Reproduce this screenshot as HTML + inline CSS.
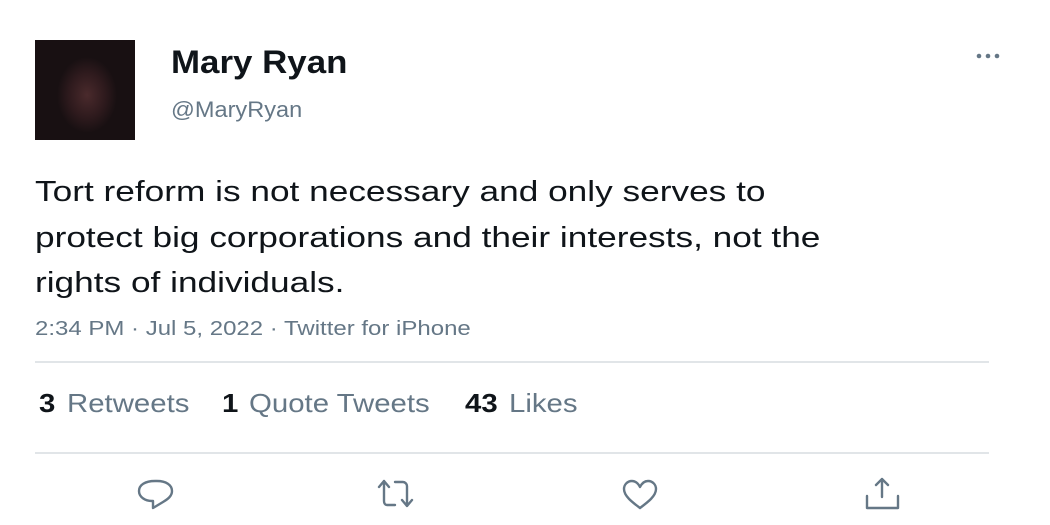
<!DOCTYPE html>
<html><head><style>
body{margin:0;width:1050px;height:525px;background:#fff;font-family:"Liberation Sans",Arial,sans-serif;position:relative;overflow:hidden}
.a{position:absolute;white-space:nowrap;transform-origin:0 0}
.av{left:35px;top:40px;width:100px;height:100px;background:radial-gradient(ellipse 30px 38px at 52px 55px,#4a2a2c 0%,#2e1a1d 60%,#181012 100%)}
.name{left:171px;top:44px;font-size:32px;font-weight:bold;color:#0f1419;transform:scaleX(1.09)}
.handle{left:171px;top:97px;font-size:22px;color:#657786;transform:scaleX(1.07)}
.text{left:35px;top:170px;font-size:29px;line-height:45.5px;color:#0f1419;transform:scaleX(1.215)}
.meta{left:35px;top:318px;font-size:20px;color:#657786;transform:scaleX(1.2)}
.hr{left:35px;width:954px;height:2px;background:#e1e5e8}
.s{top:388px;font-size:26px;color:#657786;transform:scaleX(1.13)}
.s.b{color:#0f1419;font-weight:bold}
.dots{left:975px;top:46px}
svg.i{position:absolute;left:0;top:0;fill:none;stroke:#657786;stroke-width:2.4;stroke-linecap:round;stroke-linejoin:round}
</style></head><body>
<div class="a av"></div>
<div class="a name">Mary Ryan</div>
<div class="a handle">@MaryRyan</div>
<svg class="a dots" width="28" height="20"><circle cx="4" cy="10" r="2.3" fill="#657786"/><circle cx="13" cy="10" r="2.3" fill="#657786"/><circle cx="22" cy="10" r="2.3" fill="#657786"/></svg>
<div class="a text">Tort reform is not necessary and only serves to<br>protect big corporations and their interests, not the<br>rights of individuals.</div>
<div class="a meta">2:34 PM · Jul 5, 2022 · Twitter for iPhone</div>
<div class="a hr" style="top:361px"></div>
<div class="a s b" style="left:39px">3</div>
<div class="a s" style="left:67px">Retweets</div>
<div class="a s b" style="left:222px">1</div>
<div class="a s" style="left:249px">Quote Tweets</div>
<div class="a s b" style="left:465px">43</div>
<div class="a s" style="left:509px">Likes</div>
<div class="a hr" style="top:452px"></div>
<svg class="i" width="1050" height="525">
<path d="M152 501c-7 0-13-4-13-10s6-10 16-10h2c9 0 15 4 15 10 0 5-4 8-9 11l-10 6v-7z"/>
<path d="M379 487l5-6 5 6M384 481v20c0 2 1 4 3 4h8M395 482h8c2 0 4 2 4 4v20M402 500l5 6 5-6"/>
<path d="M640 487c-2-4-5-6-8-6-5 0-8 4-8 8 0 7 8 13 16 19 8-6 16-12 16-19 0-4-3-8-8-8-3 0-6 2-8 6z"/>
<path d="M882 479v18M876 485l6-6 6 6M867 496v12h31v-12"/>
</svg>
</body></html>
